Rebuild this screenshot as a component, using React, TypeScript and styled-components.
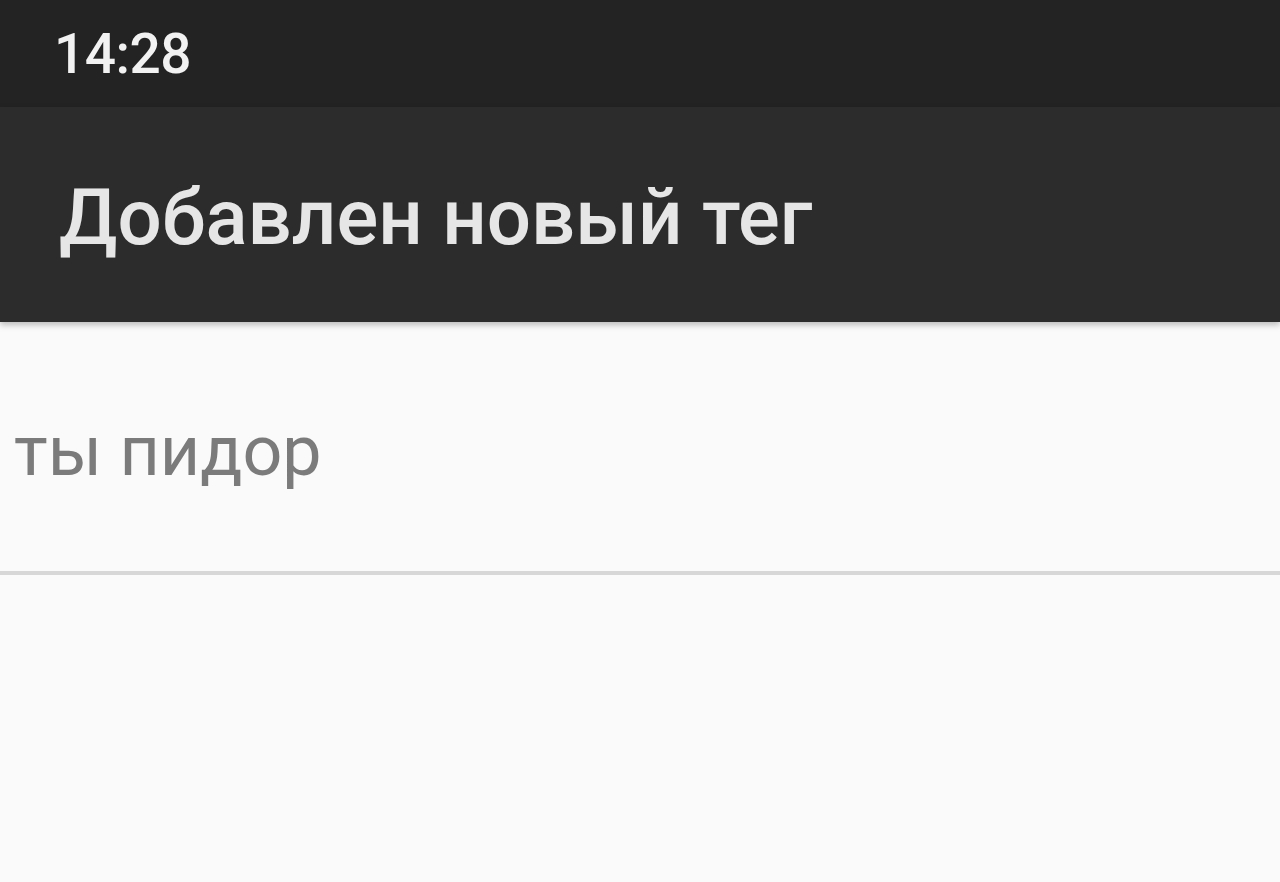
import React from "react";
import styled, { createGlobalStyle } from "styled-components";

const Global = createGlobalStyle`
  html, body { margin: 0; padding: 0; background: #fafafa; }
  body { font-family: Roboto, "Noto Sans", Arial, sans-serif; }
  #root { min-height: 882px; }
`;

const Screen = styled.div`
  display: flex;
  flex-direction: column;
  width: 1280px;
  height: 882px;
  background: #fafafa;
  overflow: hidden;
`;

const StatusBar = styled.div`
  height: 107px;
  background: #232323;
  display: flex;
  align-items: center;
  padding-left: 54px;
  box-sizing: border-box;
`;

const Clock = styled.span`
  font-family: Roboto, sans-serif;
  font-weight: 500;
  font-size: 55px;
  color: #f2f2f2;
  letter-spacing: -0.5px;
  line-height: 1;
  margin-top: 2px;
`;

const Toolbar = styled.div`
  height: 215px;
  background: #2c2c2c;
  display: flex;
  align-items: center;
  padding-left: 59px;
  box-sizing: border-box;
  box-shadow: 0 3px 6px rgba(0, 0, 0, 0.25);
  position: relative;
  z-index: 1;
`;

const Title = styled.h1`
  margin: 0;
  font-family: Roboto, sans-serif;
  font-weight: 500;
  font-size: 78px;
  line-height: 1;
  color: #e6e6e6;
  margin-top: 6px;
`;

const List = styled.div`
  display: flex;
  flex-direction: column;
  flex: 1;
  background: #fafafa;
`;

const Row = styled.div`
  height: 249px;
  display: flex;
  align-items: center;
  padding-left: 14px;
  box-sizing: border-box;
`;

const Tag = styled.span`
  font-family: Roboto, sans-serif;
  font-size: 70px;
  line-height: 1;
  color: #7b7b7b;
  margin-top: 8px;
`;

const Divider = styled.div`
  height: 4px;
  background: #d7d7d7;
`;

export default function App() {
  return (
    <>
      <Global />
      <Screen>
        <StatusBar>
          <Clock>14:28</Clock>
        </StatusBar>
        <Toolbar>
          <Title>Добавлен новый тег</Title>
        </Toolbar>
        <List>
          <Row>
            <Tag>ты пидор</Tag>
          </Row>
          <Divider />
        </List>
      </Screen>
    </>
  );
}
